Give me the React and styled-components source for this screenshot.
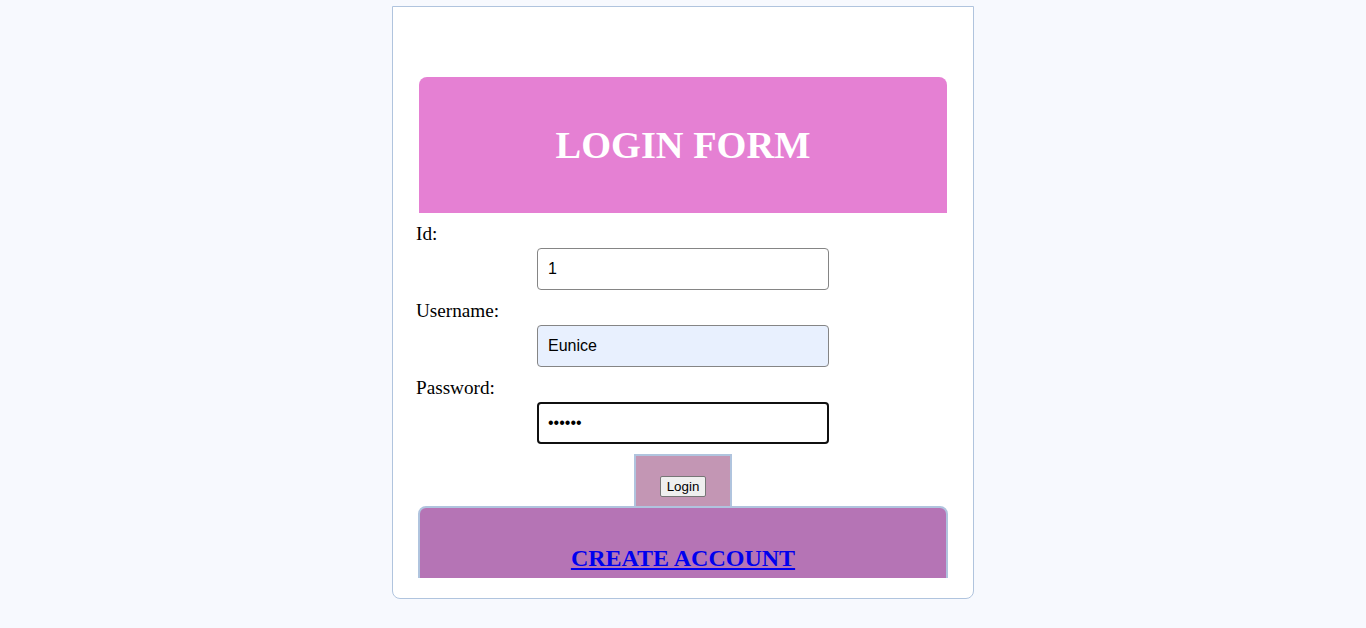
import React from 'react';
import styled, { createGlobalStyle } from 'styled-components';

const GlobalStyle = createGlobalStyle`
  html, body {
    margin: 0;
    padding: 0;
    background: #f7f9fe;
    font-family: "Liberation Serif", "Times New Roman", serif;
  }
`;

const Page = styled.div`
  display: flex;
  justify-content: center;
  padding-top: 6px;
`;

const Card = styled.div`
  width: 534px;
  background: #fff;
  border: 1px solid #b0c4de;
  border-radius: 0 0 8px 8px;
  padding: 0 23px 20px;
  box-sizing: content-box;
`;

const Inner = styled.div`
  height: 571px;
  overflow: hidden;
  padding-top: 70px;
  box-sizing: border-box;
  font-size: 19.2px;
`;

const Header = styled.div`
  margin: 0 3px;
  height: 136px;
  background: #e580d3;
  border-radius: 8px 8px 0 0;
  display: flex;
  align-items: center;
  justify-content: center;

  h1 {
    margin: 0;
    color: #fff;
    font-size: 38.4px;
    font-weight: bold;
  }
`;

const Field = styled.div`
  display: flex;
  flex-direction: column;
  align-items: center;
  padding-top: 10px;
`;

const Label = styled.label`
  align-self: flex-start;
  line-height: 22px;
  height: 22px;
  color: #000;
`;

const Input = styled.input`
  margin-top: 3px;
  width: 292px;
  height: 42px;
  box-sizing: border-box;
  border: ${({ $focused }) => ($focused ? '2px solid #101010' : '1px solid #858585')};
  border-radius: 4px;
  padding: 0 ${({ $focused }) => ($focused ? '9px' : '10px')};
  font-family: "Liberation Sans", Arial, sans-serif;
  font-size: 16px;
  color: #000;
  background: ${({ $filled }) => ($filled ? '#e8f0fe' : '#fff')};
  outline: none;
`;

const LoginBox = styled.div`
  margin: 10px auto 0;
  width: 98px;
  height: 52px;
  box-sizing: border-box;
  background: #c396b4;
  border: 2px solid #b0c4de;
  border-bottom: none;
  display: flex;
  justify-content: center;
  padding-top: 20px;
`;

const Button = styled.button`
  height: 21px;
  padding: 1px 6px;
  font-family: "Liberation Sans", Arial, sans-serif;
  font-size: 13.33px;
  color: #000;
  background: #efefef;
  border: 1px solid #767676;
  border-radius: 2px;
`;

const CreateBox = styled.div`
  margin: 0 2px;
  height: 120px;
  background: #b574b5;
  border: 2px solid #b0c4de;
  border-radius: 8px 8px 0 0;
  padding-top: 17px;
  text-align: center;

  h2 {
    margin: 20px 0;
    font-size: 24px;
    font-weight: bold;
  }

  a {
    color: #0000ee;
    text-decoration: underline;
  }
`;

const App = () => (
  <>
    <GlobalStyle />
    <Page>
      <Card>
        <Inner>
          <Header>
            <h1>LOGIN FORM</h1>
          </Header>
          <Field>
            <Label>Id:</Label>
            <Input type="text" defaultValue="1" />
          </Field>
          <Field>
            <Label>Username:</Label>
            <Input type="text" defaultValue="Eunice" $filled />
          </Field>
          <Field>
            <Label>Password:</Label>
            <Input type="password" defaultValue="secret" $focused />
          </Field>
          <LoginBox>
            <Button type="button">Login</Button>
          </LoginBox>
          <CreateBox>
            <h2><a href="#create">CREATE ACCOUNT</a></h2>
          </CreateBox>
        </Inner>
      </Card>
    </Page>
  </>
);

export default App;
